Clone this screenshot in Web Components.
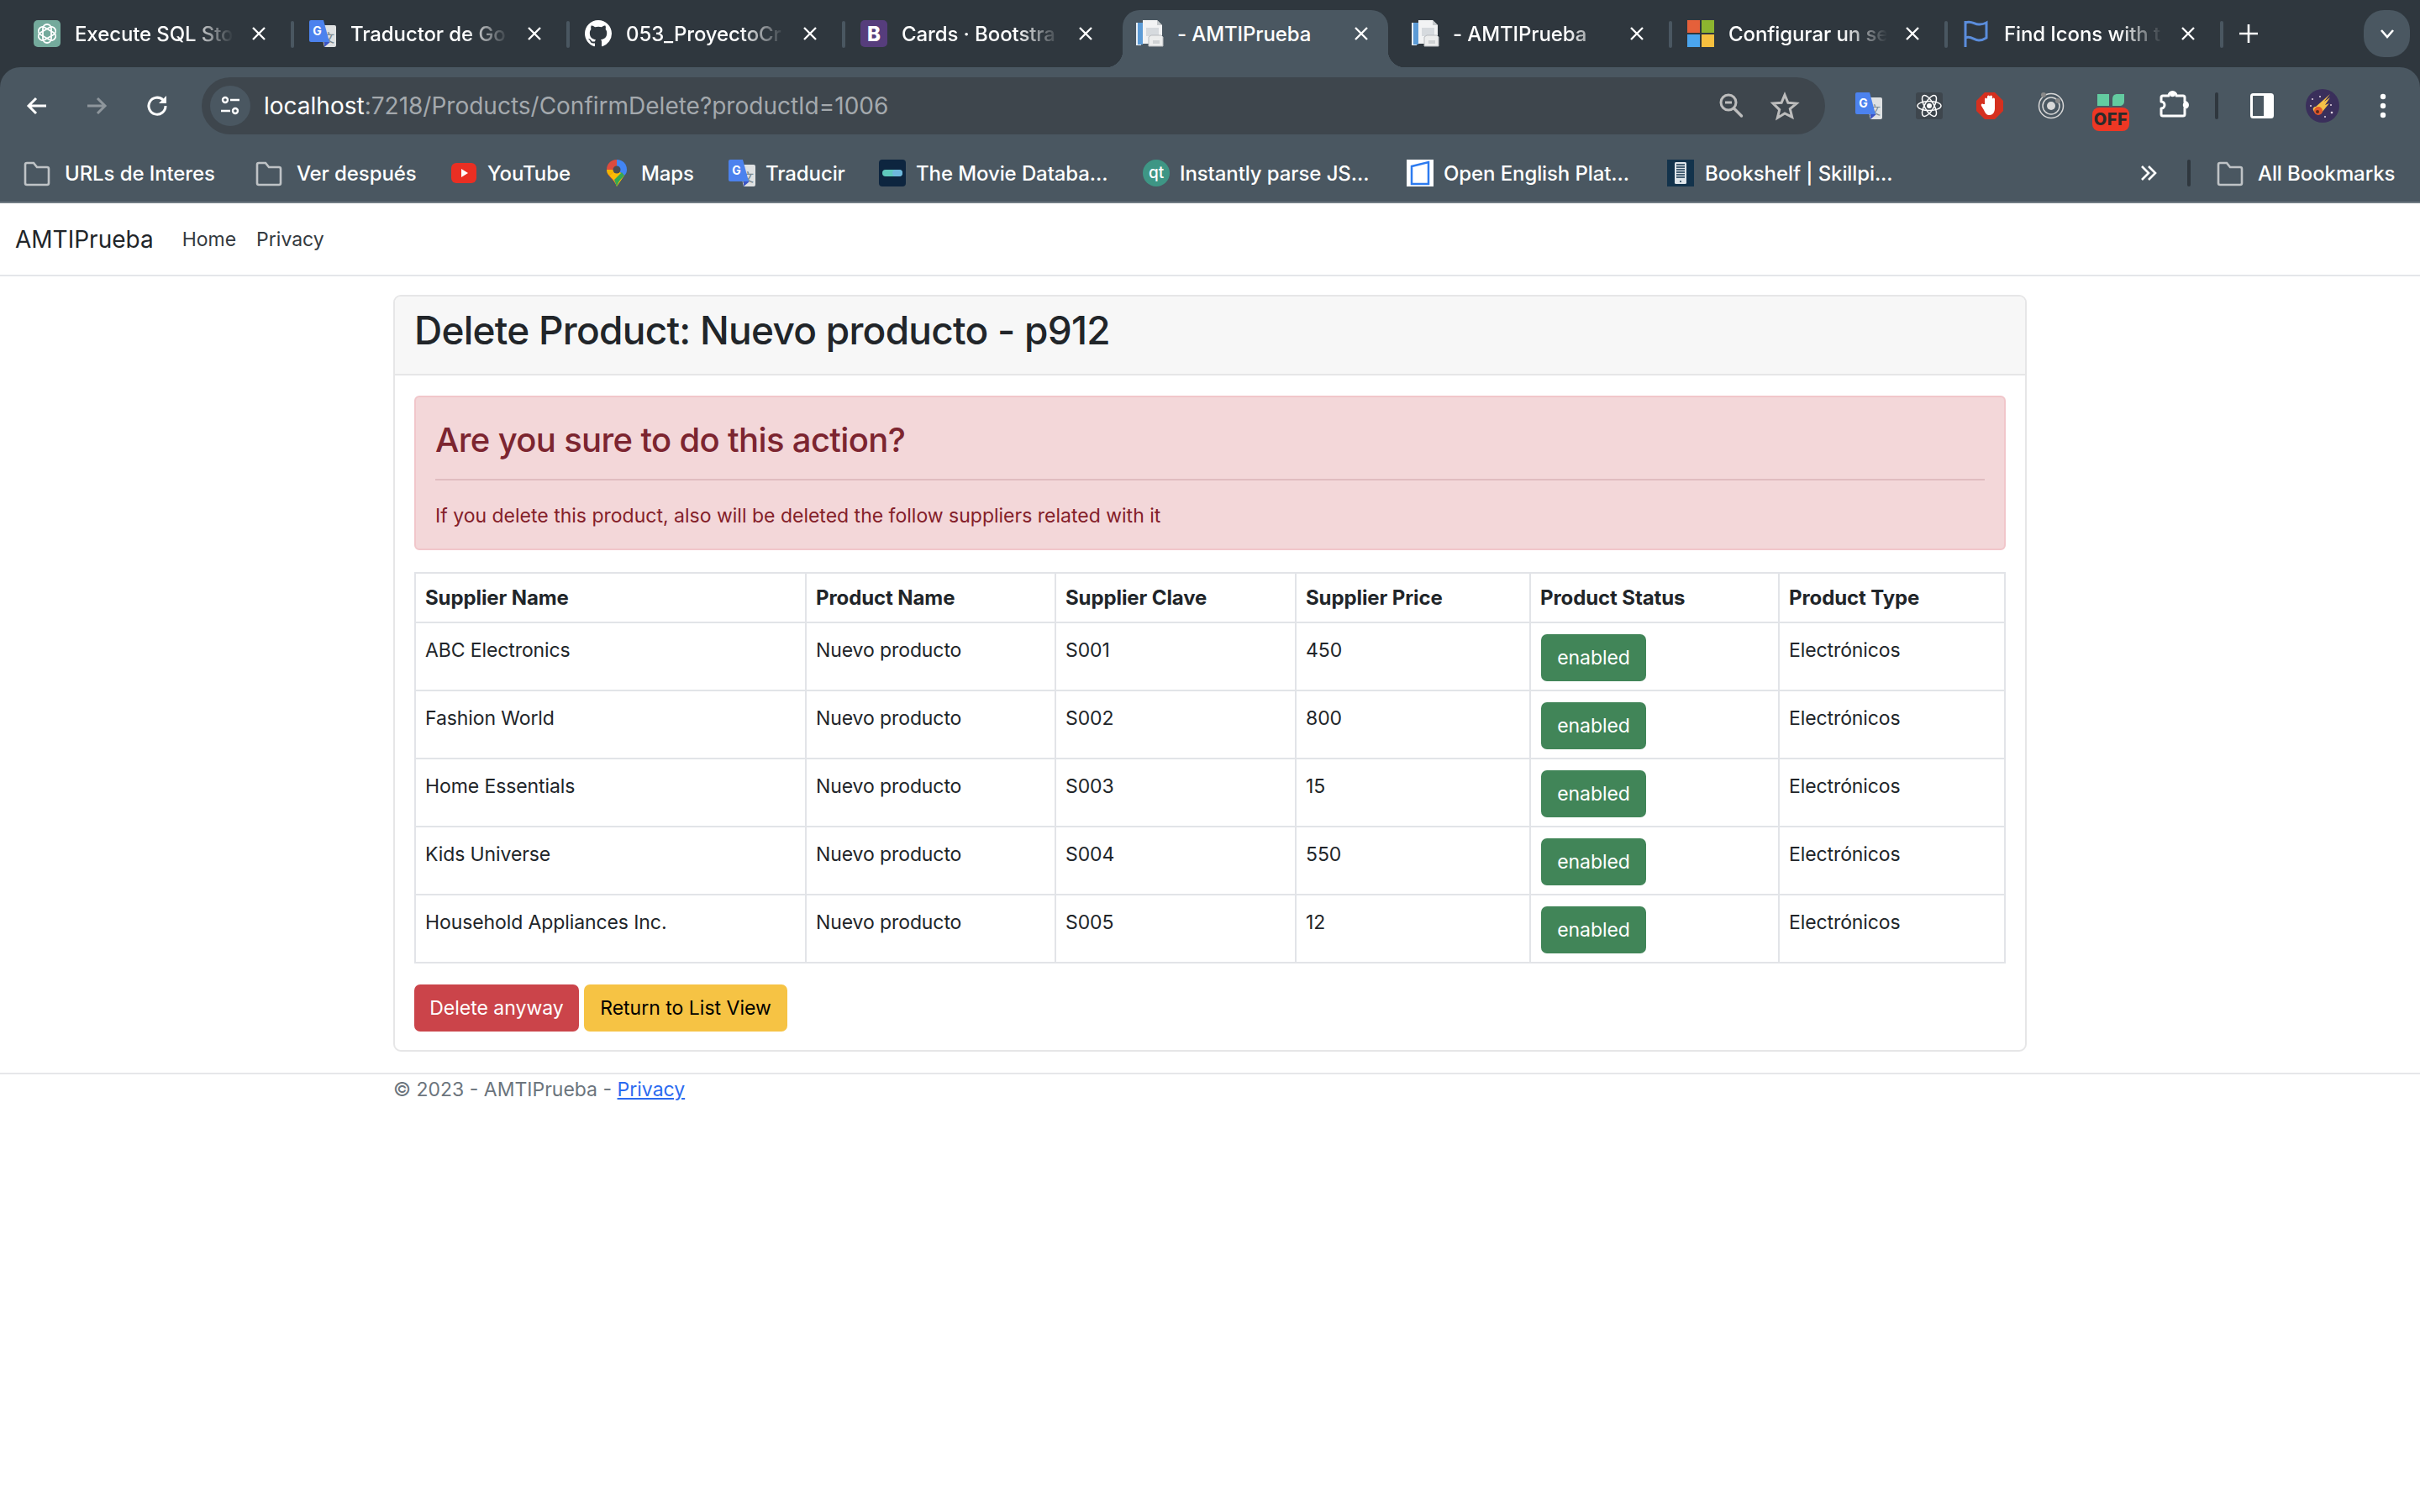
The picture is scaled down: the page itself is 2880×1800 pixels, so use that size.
<!DOCTYPE html>
<html lang="en">
<head>
<meta charset="utf-8">
<title>- AMTIPrueba</title>
<style>
  html, body { margin: 0; background: #fff; }
  body { font-family: Inter, "Liberation Sans", sans-serif; color: #212529; width: 2880px; }
</style>
</head>
<body>
<browser-chrome>
  <tab-strip>
    <browser-tab icon="openai">Execute SQL Sto</browser-tab>
    <browser-tab icon="translate">Traductor de Go</browser-tab>
    <browser-tab icon="github">053_ProyectoCr</browser-tab>
    <browser-tab icon="bootstrap" nosep>Cards · Bootstra</browser-tab>
    <browser-tab icon="doc" active nosep>- AMTIPrueba</browser-tab>
    <browser-tab icon="doc">- AMTIPrueba</browser-tab>
    <browser-tab icon="microsoft">Configurar un se</browser-tab>
    <browser-tab icon="flag">Find Icons with t</browser-tab>
  </tab-strip>
  <address-bar url="localhost" rest=":7218/Products/ConfirmDelete?productId=1006"></address-bar>
  <bookmark-bar>
    <bookmark-item icon="folder" lead="17" w="182" gap="45">URLs de Interes</bookmark-item>
    <bookmark-item icon="folder" lead="17" w="142" gap="42">Ver después</bookmark-item>
    <bookmark-item icon="youtube" lead="11" w="96" gap="46">YouTube</bookmark-item>
    <bookmark-item icon="maps" lead="9" w="62" gap="42">Maps</bookmark-item>
    <bookmark-item icon="translate" lead="12" w="94" gap="41">Traducir</bookmark-item>
    <bookmark-item icon="tmdb" lead="12" w="228" gap="42">The Movie Databa...</bookmark-item>
    <bookmark-item icon="qt" lead="12" w="227" gap="43">Instantly parse JS...</bookmark-item>
    <bookmark-item icon="openenglish" lead="12" w="224" gap="42">Open English Plat...</bookmark-item>
    <bookmark-item icon="bookshelf" lead="13" w="223" gap="0">Bookshelf | Skillpi...</bookmark-item>
    <bookmark-item slot="end" icon="folder" lead="17" w="164" gap="0">All Bookmarks</bookmark-item>
  </bookmark-bar>
</browser-chrome>

<site-navbar brand="AMTIPrueba">
  <a href="#">Home</a>
  <a href="#">Privacy</a>
</site-navbar>

<main-container>
  <delete-card heading="Delete Product: Nuevo producto - p912">
    <alert-box heading="Are you sure to do this action?">If you delete this product, also will be deleted the follow suppliers related with it</alert-box>
    <supplier-table></supplier-table>
    <action-row>
      <site-button kind="danger">Delete anyway</site-button>
      <site-button kind="warning">Return to List View</site-button>
    </action-row>
  </delete-card>
</main-container>

<site-footer></site-footer>

<script>
'use strict';

const ICONS = {
  openai: `<svg viewBox="0 0 32 32"><rect width="32" height="32" rx="5" fill="#74aa9c"/><g fill="none" stroke="#fff" stroke-width="1.8"><rect x="11" y="5" width="10" height="22" rx="5"/><rect x="11" y="5" width="10" height="22" rx="5" transform="rotate(60 16 16)"/><rect x="11" y="5" width="10" height="22" rx="5" transform="rotate(120 16 16)"/></g></svg>`,
  translate: `<svg viewBox="0 0 32 32"><path d="M12 6h18a2 2 0 0 1 2 2v22a2 2 0 0 1-2 2H18z" fill="#dfe1e2"/><text x="23" y="26" font-size="14" fill="#7d8a8f" text-anchor="middle" font-family="Noto Sans CJK SC, sans-serif">文</text><path d="M2 0h15l7 26H2a2 2 0 0 1-2-2V2a2 2 0 0 1 2-2z" fill="#4c82ee"/><path d="M18 26h7l-7 6z" fill="#3b55c4"/><text x="9.5" y="18" font-size="14" font-weight="700" fill="#fff" text-anchor="middle">G</text></svg>`,
  github: `<svg viewBox="0 0 16 16"><path fill="#fff" d="M8 0C3.58 0 0 3.58 0 8c0 3.54 2.29 6.53 5.47 7.59.4.07.55-.17.55-.38 0-.19-.01-.82-.01-1.49-2.01.37-2.53-.49-2.69-.94-.09-.23-.48-.94-.82-1.13-.28-.15-.68-.52-.01-.53.63-.01 1.08.58 1.23.82.72 1.21 1.87.87 2.33.66.07-.52.28-.87.51-1.07-1.78-.2-3.64-.89-3.64-3.95 0-.87.31-1.59.82-2.15-.08-.2-.36-1.02.08-2.12 0 0 .67-.21 2.2.82.64-.18 1.32-.27 2-.27.68 0 1.36.09 2 .27 1.53-1.04 2.2-.82 2.2-.82.44 1.1.16 1.92.08 2.12.51.56.82 1.27.82 2.15 0 3.07-1.87 3.75-3.65 3.95.29.25.54.73.54 1.48 0 1.07-.01 1.93-.01 2.2 0 .21.15.46.55.38A8.013 8.013 0 0016 8c0-4.42-3.58-8-8-8z"/></svg>`,
  bootstrap: `<svg viewBox="0 0 32 32"><rect width="32" height="32" rx="5" fill="#563d7c"/><text x="16" y="25" font-size="24" font-weight="800" fill="#fff" text-anchor="middle">B</text></svg>`,
  doc: `<svg viewBox="0 0 32 32"><path d="M0 3h6v27H0z" fill="#e8eef5"/><path d="M2 3h6v26H2z" fill="#5c9bd6"/><path d="M8 0h17l6 6v22H8z" fill="#f2f3f4"/><path d="M25 0l6 6h-6z" fill="#c5c9cc"/><path d="M12 9h15v10H12z" fill="#d6dade"/><path d="M15 20l3-2h12l2 2v11H15z" fill="#eceded" stroke="#b9bdc0"/><path d="M20 24h8v4h-8z" fill="#cfd2d4"/></svg>`,
  microsoft: `<svg viewBox="0 0 32 32"><path d="M0 0h15v15H0z" fill="#e5603a"/><path d="M17 0h15v15H17z" fill="#8db52f"/><path d="M0 17h15v15H0z" fill="#4ba5ee"/><path d="M17 17h15v15H17z" fill="#f6c03f"/></svg>`,
  flag: `<svg viewBox="0 0 32 32"><path d="M3 1v31" stroke="#5b8ddc" stroke-width="3" fill="none"/><path d="M3 3c8-3 11 3 17 2 3 0 6-1 8-2v18c-3 2-6 3-9 3-6 0-9-6-16-3" fill="none" stroke="#5b8ddc" stroke-width="3"/></svg>`,
  folder: `<svg viewBox="0 0 32 32"><path d="M2 6a2 2 0 0 1 2-2h8l4 5h12a2 2 0 0 1 2 2v17a2 2 0 0 1-2 2H4a2 2 0 0 1-2-2z" fill="none" stroke="#bfc3c6" stroke-width="2.6"/></svg>`,
  youtube: `<svg viewBox="0 0 32 32"><rect x="0" y="4" width="30" height="24" rx="6" fill="#ea2f23"/><path d="M12 11l8 5-8 5z" fill="#fff"/></svg>`,
  maps: `<svg viewBox="0 0 32 32"><path d="M12 0C5 0 0 5 0 12c0 8 9 11 12 20z" fill="#dd4b3e"/><path d="M12 0c7 0 12 5 12 12 0 3-1 5-3 7L12 12z" fill="#4285f4"/><path d="M0 12c0 3 1 5 3 7l9-7z" fill="#f4b400"/><path d="M3 19c4 4 7 7 9 13l9-13-9-7z" fill="#fbbc04"/><path d="M21 19c-4 4-7 7-9 13l-3-8 9-9z" fill="#34a853"/><circle cx="12" cy="12" r="4.5" fill="#4a4e52"/></svg>`,
  tmdb: `<svg viewBox="0 0 32 32"><rect width="32" height="32" rx="4" fill="#0d253f"/><rect x="4" y="12" width="24" height="8" rx="4" fill="#5fc9bd"/><rect x="16" y="12" width="12" height="8" rx="4" fill="#6fb8dd"/></svg>`,
  qt: `<svg viewBox="0 0 32 32"><circle cx="16" cy="16" r="16" fill="#3e9685"/><text x="16" y="22" font-size="19" fill="#fff" text-anchor="middle">qt</text></svg>`,
  openenglish: `<svg viewBox="0 0 32 32"><rect width="32" height="32" fill="#fff"/><path d="M6 8l20-5v26H6z" fill="#fff" stroke="#2d7bf0" stroke-width="2.5"/></svg>`,
  bookshelf: `<svg viewBox="0 0 32 32"><rect width="32" height="32" fill="#13334c"/><rect x="9" y="3" width="14" height="26" rx="1.5" fill="#dfe5ea"/><path d="M11 6h10M11 9h10M11 12h10M11 15h10M11 18h10M11 21h10" stroke="#13334c" stroke-width="1.5"/><circle cx="16" cy="26" r="1" fill="#13334c"/></svg>`,
  zoomout: `<svg viewBox="0 0 30 32"><circle cx="12" cy="12" r="9" fill="none" stroke="#bdbdbd" stroke-width="3"/><path d="M8 12h8" stroke="#bdbdbd" stroke-width="3"/><path d="M18.500 19l9 9" stroke="#bdbdbd" stroke-width="3.400" stroke-linecap="round"/></svg>`,
  star: `<svg viewBox="0 0 32 32"><path d="M16 3l3.900 9.300 10.100.800-7.700 6.500 2.400 9.800L16 25l-8.700 5.400 2.400-9.800L2 13.100l10.100-.8z" fill="none" stroke="#bdbdbd" stroke-width="3" stroke-linejoin="miter"/></svg>`,
  react: `<svg viewBox="0 0 32 32"><rect width="32" height="32" rx="3" fill="#3e464d"/><g fill="none" stroke="#fff" stroke-width="1.500"><ellipse cx="16" cy="16" rx="14" ry="5.500"/><ellipse cx="16" cy="16" rx="14" ry="5.500" transform="rotate(60 16 16)"/><ellipse cx="16" cy="16" rx="14" ry="5.500" transform="rotate(120 16 16)"/></g><circle cx="16" cy="16" r="3" fill="#fff"/></svg>`,
  adblock: `<svg viewBox="0 0 32 32"><path d="M10 0h12l10 10v12L22 32H10L0 22V10z" fill="#d5301f"/><path d="M10 14V8a1.500 1.500 0 0 1 3 0V5a1.500 1.500 0 0 1 3 0v0a1.500 1.500 0 0 1 3 0v3a1.500 1.500 0 0 1 3 0v11c0 5-3 8-6 8-4 0-5-2-7-6l-3-5c-1-2 1-3 2-2z" fill="#fff"/></svg>`,
  target: `<svg viewBox="0 0 32 32"><circle cx="16" cy="16" r="14.500" fill="none" stroke="#d8d8d8" stroke-width="1.500"/><circle cx="16" cy="16" r="10" fill="none" stroke="#d8d8d8" stroke-width="1.500"/><circle cx="16" cy="16" r="5" fill="#d8d8d8"/><circle cx="7" cy="3" r="3" fill="#888"/><circle cx="24" cy="10" r="3" fill="#888"/></svg>`,
  off: `<svg viewBox="0 0 44 44"><path d="M6 0h14v14H6z" fill="#63cba0"/><path d="M24 14V6c0-4 2-6 6-6h8v8c0 4-2 6-6 6z" fill="#63cba0"/><rect y="16" width="44" height="28" rx="8" fill="#ee3724"/><text x="22" y="37" font-size="20" font-weight="800" fill="#2b2b2b" text-anchor="middle" letter-spacing=".5">OFF</text></svg>`,
  puzzle: `<svg viewBox="0 0 34 32"><path d="M4 6h7a4.500 4.500 0 0 1 9 0h8a2 2 0 0 1 2 2v5.500a3.500 3.500 0 0 1 0 7V28a2 2 0 0 1-2 2H4a2 2 0 0 1-2-2v-7a4 4 0 0 0 0-8V8a2 2 0 0 1 2-2z" fill="none" stroke="#fff" stroke-width="3" stroke-linejoin="round"/><circle cx="15.500" cy="4" r="3.200" fill="#fff"/><circle cx="31" cy="17" r="3.200" fill="#fff"/></svg>`,
  panel: `<svg viewBox="0 0 28 30"><rect x="1.500" y="1.500" width="25" height="27" rx="2" fill="none" stroke="#fff" stroke-width="3"/><rect x="16" y="1.500" width="10.500" height="27" fill="#fff"/></svg>`,
  avatar: `<svg viewBox="0 0 40 40"><circle cx="20" cy="20" r="20" fill="#3a2f5b"/><path d="M12 21L29 6l-7 9 7-5-6 9 5-2-9 11c-4 3-9 1-10-3-1-2 1-4 3-4z" fill="#f5c147"/><circle cx="15" cy="26" r="5" fill="#e2582c"/><circle cx="14" cy="27" r="2" fill="#5a2b1c"/><g fill="#e9d9e6"><circle cx="8" cy="12" r="1"/><circle cx="31" cy="28" r="1.300"/><circle cx="17" cy="9" r="1"/><circle cx="6" cy="20" r="1"/><circle cx="30" cy="19" r="1"/><circle cx="23" cy="33" r="1"/></g></svg>`,
  back: `<svg viewBox="0 0 28 28"><path d="M25 14H5M13 5l-9 9 9 9" fill="none" stroke="#fff" stroke-width="3"/></svg>`,
  forward: `<svg viewBox="0 0 28 28"><path d="M3 14h20M15 5l9 9-9 9" fill="none" stroke="#8e969c" stroke-width="3"/></svg>`,
  reload: `<svg viewBox="0 0 28 28"><path d="M23 14a10 10 0 1 1-3-7" fill="none" stroke="#fff" stroke-width="3"/><path d="M24 2v9h-9z" fill="#fff"/></svg>`,
  tune: `<svg viewBox="0 0 24 24"><circle cx="6" cy="5" r="3" fill="none" stroke="#fff" stroke-width="2.400"/><path d="M12 5h11M1 18h11" stroke="#fff" stroke-width="2.400"/><circle cx="18" cy="18" r="3" fill="none" stroke="#fff" stroke-width="2.400"/></svg>`
};

function define(name, html) {
  customElements.define(name, class extends HTMLElement {
    constructor() {
      super();
      const root = this.attachShadow({mode: 'open'});
      root.innerHTML = typeof html === 'function' ? html(this) : html;
    }
  });
}

class FavIcon extends HTMLElement {
  connectedCallback() {
    if (this.shadowRoot) return;
    const root = this.attachShadow({mode: 'open'});
    const w = this.getAttribute('w') || 32;
    const h = this.getAttribute('h') || w;
    root.innerHTML = `<style>
:host { display: block; flex: none; width: ${w}px; height: ${h}px; }
svg { display: block; width: 100%; height: 100%; overflow: visible; font-family: Inter, sans-serif; }
</style>${ICONS[this.getAttribute('name')] || ''}`;
  }
}
customElements.define('fav-icon', FavIcon);

define('browser-chrome', `<style>
:host { display: block; background: #2f373e; height: 242px; }
</style><slot></slot>`);

define('tab-strip', `<style>
:host { display: flex; height: 80px; padding-left: 24px; box-sizing: border-box; color: #fff; }
.plus { width: 22px; height: 22px; margin: 29px 0 0 17px; }
.more { margin: 12px 12px 0 auto; width: 55px; height: 56px; border-radius: 24px; background: #4a5761; display: flex; align-items: center; justify-content: center; }
</style>
<slot></slot>
<svg class="plus" viewBox="0 0 22 22"><path d="M11 0v22M0 11h22" stroke="#fff" stroke-width="2.600"/></svg>
<div class="more"><svg width="18" height="12" viewBox="0 0 18 12"><path d="M2 2l7 8 7-8" fill="none" stroke="#fff" stroke-width="2.600"/></svg></div>`);

class BrowserTab extends HTMLElement {
  constructor() {
    super();
    const root = this.attachShadow({mode: 'open'});
    root.innerHTML = `<style>
:host { display: block; flex: none; width: 328px; height: 80px; position: relative; font: 500 24px Inter, sans-serif; }
.tab { box-sizing: border-box; width: 316px; height: 68px; margin-top: 12px; padding: 0 20px 12px 16px; display: flex; align-items: center; border-radius: 20px 20px 0 0; position: relative; }
.title { flex: 1; min-width: 0; margin: 0 18px 0 17px; white-space: nowrap; overflow: hidden; -webkit-mask-image: linear-gradient(90deg, #000 72%, transparent 100%); mask-image: linear-gradient(90deg, #000 72%, transparent 100%); letter-spacing: -.1px; }
.close { width: 16px; height: 16px; margin: 0 4px; flex: none; }
.sep { position: absolute; left: 322px; top: 25px; width: 4px; height: 32px; background: #4a5761; border-radius: 2px; }
:host([active]) .tab { background: #4a5761; }
:host([active]) .tab::before, :host([active]) .tab::after { content: ''; position: absolute; bottom: 0; width: 20px; height: 20px; }
:host([active]) .tab::before { left: -20px; background: radial-gradient(circle at 0 0, transparent 20px, #4a5761 20.5px); }
:host([active]) .tab::after { right: -20px; background: radial-gradient(circle at 100% 0, transparent 20px, #4a5761 20.5px); }
:host([active]) .title { -webkit-mask-image: none; mask-image: none; }
:host([nosep]) .sep { display: none; }
</style>
<div class="tab">
  <fav-icon name="${this.getAttribute('icon')}"></fav-icon>
  <div class="title"><slot></slot></div>
  <svg class="close" viewBox="0 0 16 16"><path d="M1 1l14 14M15 1L1 15" stroke="#fff" stroke-width="2.400"/></svg>
</div>
<div class="sep"></div>`;
  }
}
customElements.define('browser-tab', BrowserTab);

define('address-bar', el => `<style>
:host { display: flex; align-items: center; height: 80px; background: #4a5761; border-radius: 24px 24px 0 0; box-sizing: border-box; padding: 12px 0 0 30px; }
.nav { display: flex; align-items: center; gap: 45px; width: 210px; flex: none; }
.nav fav-icon:nth-child(2) { margin-left: -2px; }
.omni { width: 1932px; flex: none; height: 68px; box-sizing: border-box; border-radius: 34px; background: #3e464d; display: flex; align-items: center; padding: 0 32px 0 10px; }
.chip { width: 48px; height: 48px; border-radius: 50%; background: #4a5761; display: flex; align-items: center; justify-content: center; flex: none; margin-right: 16px; }
.url { flex: 1; font: 400 28px Inter, sans-serif; color: #fff; white-space: nowrap; }
.url span { color: #a4a9ad; }
.right { display: flex; align-items: center; gap: 33px; }
.tools { display: flex; align-items: center; margin-left: 36px; height: 68px; }
.sep { width: 4px; height: 32px; background: #2f373e; border-radius: 2px; flex: none; }
</style>
<div class="nav">
  <fav-icon name="back" w="28"></fav-icon>
  <fav-icon name="forward" w="28"></fav-icon>
  <fav-icon name="reload" w="28"></fav-icon>
</div>
<div class="omni">
  <div class="chip"><fav-icon name="tune" w="24"></fav-icon></div>
  <div class="url">${el.getAttribute('url')}<span>${el.getAttribute('rest')}</span></div>
  <div class="right">
    <fav-icon name="zoomout" w="30" h="32"></fav-icon>
    <fav-icon name="star" w="32"></fav-icon>
  </div>
</div>
<div class="tools">
  <fav-icon name="translate"></fav-icon>
  <fav-icon name="react" style="margin-left:40px"></fav-icon>
  <fav-icon name="adblock" style="margin-left:40px"></fav-icon>
  <fav-icon name="target" style="margin-left:41px"></fav-icon>
  <fav-icon name="off" w="44" style="margin:16px 0 0 33px"></fav-icon>
  <fav-icon name="puzzle" w="34" h="32" style="margin:-4px 0 0 36px"></fav-icon>
  <div class="sep" style="margin-left:32px"></div>
  <fav-icon name="panel" w="28" h="30" style="margin-left:38px"></fav-icon>
  <fav-icon name="avatar" w="40" style="margin-left:38px"></fav-icon>
  <svg width="8" height="30" viewBox="0 0 8 30" style="margin-left:48px"><g fill="#fff"><circle cx="4" cy="4" r="3.200"/><circle cx="4" cy="15" r="3.200"/><circle cx="4" cy="26" r="3.200"/></g></svg>
</div>`);

define('bookmark-bar', `<style>
:host { display: flex; align-items: center; height: 82px; background: #4a5761; box-sizing: border-box; padding: 12px 0 0 28px; border-bottom: 2px solid #6f7a83; }
.list { display: flex; align-items: center; flex: 1; }
.sep { width: 4px; height: 32px; background: #2f373e; border-radius: 2px; margin: 0 31px 0 36px; }
.end { display: flex; padding-right: 29px; }
</style>
<div class="list"><slot></slot></div>
<svg width="20" height="20" viewBox="0 0 20 20" style="flex:none"><path d="M2 2l8 8-8 8M10 2l8 8-8 8" fill="none" stroke="#fff" stroke-width="2.600"/></svg>
<div class="sep"></div>
<div class="end"><slot name="end"></slot></div>`);

class BookmarkItem extends HTMLElement {
  constructor() {
    super();
    const root = this.attachShadow({mode: 'open'});
    root.innerHTML = `<style>
:host { display: flex; align-items: center; flex: none; color: #fff; font: 500 24px Inter, sans-serif; white-space: nowrap; margin-right: ${this.getAttribute('gap')}px; }
.label { width: ${this.getAttribute('w')}px; margin-left: ${this.getAttribute('lead')}px; letter-spacing: -.1px; }
</style>
<fav-icon name="${this.getAttribute('icon')}"></fav-icon>
<div class="label"><slot></slot></div>`;
  }
}
customElements.define('bookmark-item', BookmarkItem);

define('site-navbar', el => `<style>
:host { display: flex; align-items: center; height: 87px; box-sizing: border-box; border-bottom: 2px solid #e4e6ea; padding-left: 18px; font-size: 23px; }
.brand { font-size: 28px; color: #212529; margin-right: 34px; line-height: 45px; padding-top: 2px; }
nav { display: flex; gap: 24px; }
::slotted(a) { color: #343a40; text-decoration: none; }
</style>
<div class="brand">${el.getAttribute('brand')}</div>
<nav><slot></slot></nav>`);

define('main-container', `<style>
:host { display: block; width: 1980px; box-sizing: border-box; margin: 22px auto 25px; padding: 0 18px; }
</style><slot></slot>`);

define('delete-card', el => `<style>
:host { display: block; border: 2px solid #e6e6e7; border-radius: 9px; overflow: hidden; }
header { background: #f7f7f7; border-bottom: 2px solid #e6e6e7; padding: 9px 23px 20px; height: 94px; box-sizing: border-box; }
h3 { margin: 0; font-size: 46px; font-weight: 500; line-height: 63px; letter-spacing: -.75px; color: #212529; }
.body { padding: 24px 23px 22px; display: flex; flex-direction: column; }
</style>
<header><h3>${el.getAttribute('heading')}</h3></header>
<div class="body"><slot></slot></div>`);

define('alert-box', el => `<style>
:host { display: block; background: #f3d7d9; border: 2px solid #f1c6ca; border-radius: 6px; padding: 24px 23px 21px; color: #842029; font-size: 23px; line-height: 36px; }
h4 { margin: 0; font-size: 40px; font-weight: 500; line-height: 54px; letter-spacing: -.65px; color: #7c2530; }
hr { height: 2px; border: 0; margin: 19px 0 24px; background: #e0bcc0; }
</style>
<h4>${el.getAttribute('heading')}</h4>
<hr>
<div><slot></slot></div>`);

define('status-badge', `<style>
:host { display: inline-flex; align-items: center; justify-content: center; box-sizing: border-box; width: 125px; height: 56px; background: #418558; border-radius: 7px; color: #fff; font-size: 23px; letter-spacing: -.1px; }
</style><slot></slot>`);

define('site-button', `<style>
:host { display: inline-flex; align-items: center; justify-content: center; box-sizing: border-box; height: 56px; padding: 0 18px; border-radius: 7px; font-size: 23px; white-space: nowrap; }
:host([kind="danger"]) { background: #cb444a; color: #fff; width: 196px; }
:host([kind="warning"]) { background: #f6c344; color: #000; width: 242px; }
</style><slot></slot>`);

define('action-row', `<style>
:host { display: flex; gap: 6px; margin-top: 25px; }
</style><slot></slot>`);

const SUPPLIERS = [
  ['ABC Electronics', 'S001', '450'],
  ['Fashion World', 'S002', '800'],
  ['Home Essentials', 'S003', '15'],
  ['Kids Universe', 'S004', '550'],
  ['Household Appliances Inc.', 'S005', '12']
];

define('supplier-table', () => `<style>
:host { display: block; margin-top: 26px; font-size: 23px; line-height: 36px; letter-spacing: -.1px; color: #212529; }
table { border-collapse: separate; border-spacing: 0; table-layout: fixed; width: 1894px; border-top: 2px solid #e2e4e8; border-left: 2px solid #e2e4e8; }
th, td { box-sizing: border-box; border-right: 2px solid #e2e4e8; border-bottom: 2px solid #e2e4e8; padding: 14px 11px 10px 11px; text-align: left; vertical-align: top; overflow: hidden; }
th { font-size: 24px; font-weight: 700; height: 59px; padding-top: 11px; padding-bottom: 0; }
td { height: 81px; }
td.status { padding-top: 13px; padding-bottom: 0; padding-left: 12px; }
</style>
<table>
  <colgroup><col style="width:465px"><col style="width:297px"><col style="width:286px"><col style="width:279px"><col style="width:296px"><col style="width:269px"></colgroup>
  <thead><tr><th>Supplier Name</th><th>Product Name</th><th>Supplier Clave</th><th>Supplier Price</th><th>Product Status</th><th>Product Type</th></tr></thead>
  <tbody>${SUPPLIERS.map(s => `<tr><td>${s[0]}</td><td>Nuevo producto</td><td>${s[1]}</td><td>${s[2]}</td><td class="status"><status-badge>enabled</status-badge></td><td>Electrónicos</td></tr>`).join('')}</tbody>
</table>`);

define('site-footer', `<style>
:host { display: block; border-top: 2px solid #e6e7ea; height: 40px; font-size: 23px; line-height: 36px; color: #6c757d; padding-left: 468px; }
a { color: #2b6af0; text-decoration: underline; }
</style>© 2023 - AMTIPrueba - <a href="#">Privacy</a>`);
</script>
</body>
</html>
